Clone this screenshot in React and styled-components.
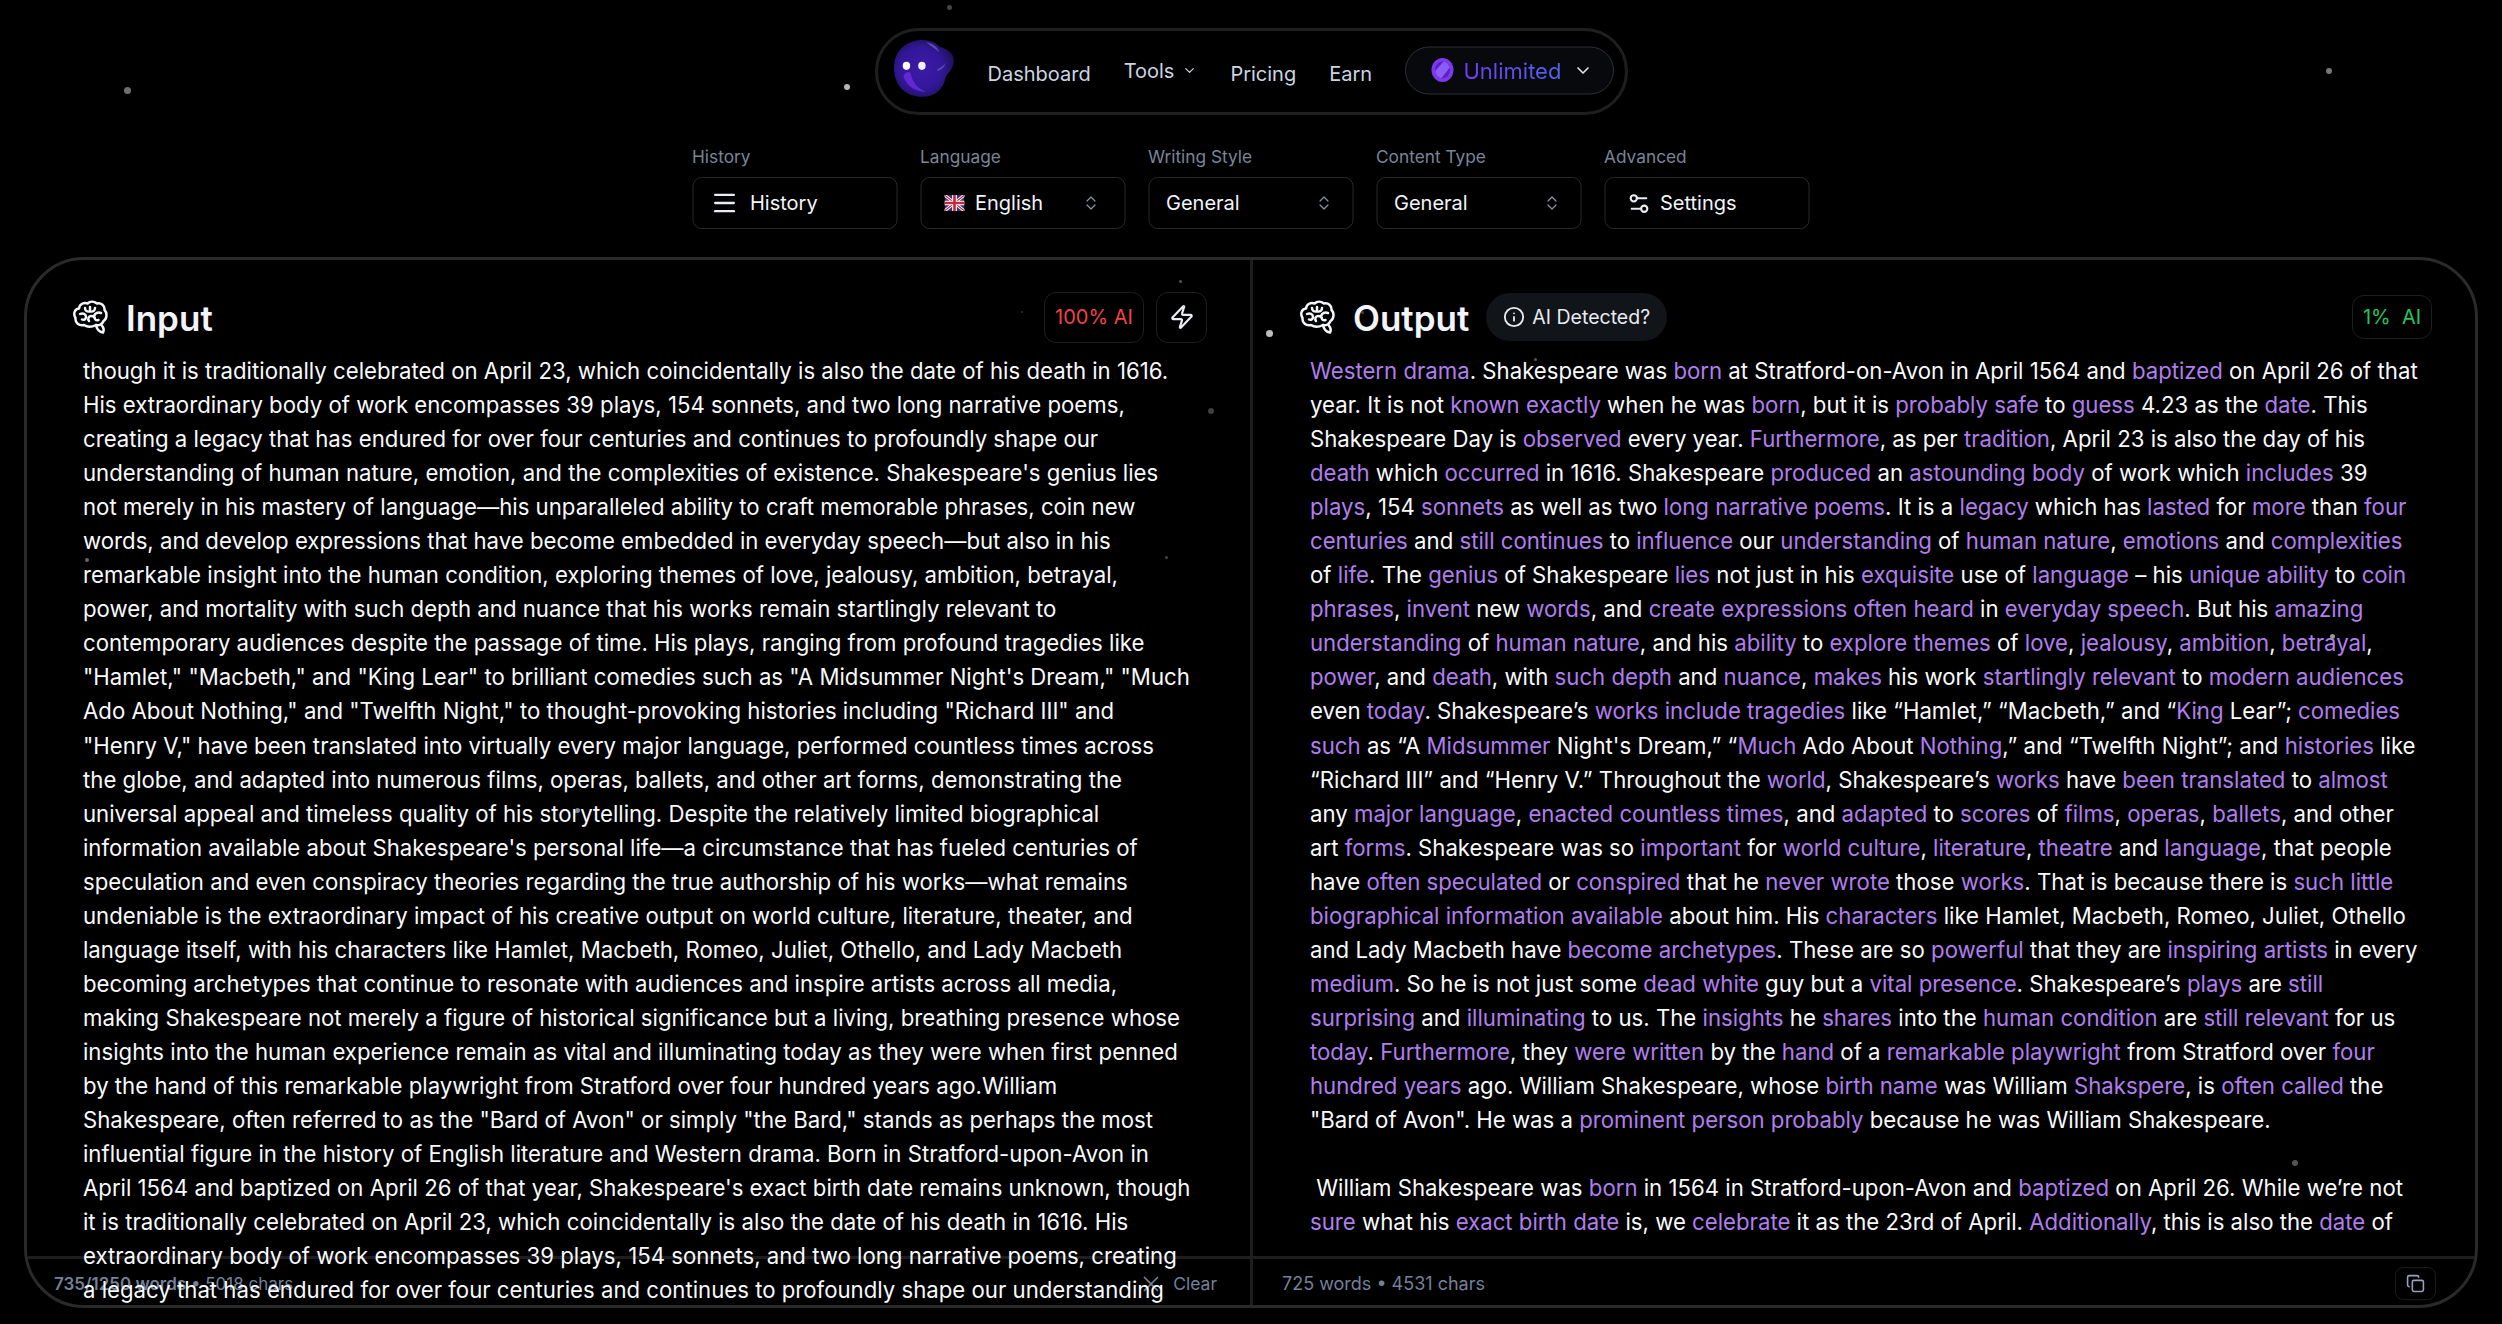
import React from "react";
import styled, { createGlobalStyle } from "styled-components";
import { ChevronDown, Menu, Settings2, Zap, Info, X, Copy } from "lucide-react";

const Global = createGlobalStyle`
  html, body { margin: 0; padding: 0; background: #000; }
  body { font-family: Inter, "Liberation Sans", sans-serif; color: #fff; }
`;
const Page = styled.div`
  position: relative; width: 2502px; height: 1324px; overflow: hidden; background: #000;
  display: flex; flex-direction: column; align-items: center; padding-top: 28px; box-sizing: border-box;
`;
const Dot = styled.i`
  position: absolute; border-radius: 50%; background: ${p => p.$c || "#777"}; z-index: 5;
`;
const Nav = styled.nav`
  width: 753px; height: 87px; box-sizing: border-box; border: 3px solid #1f1f1f; border-radius: 44px;
  display: flex; align-items: center; padding: 0 8px 0 14px;
`;
const Logo = styled.svg` width: 66px; height: 66px; flex: none; transform: translateY(-1px); `;
const NavLinks = styled.div` display: flex; align-items: center; margin-left: 30px; gap: 33px; flex: 1; `;
const NavLink = styled.a`
  font-size: 20px; color: #cbd5e1; display: flex; align-items: center; gap: 8px; white-space: nowrap;
  transform: translateY(${p => p.$up ? "-1px" : "2px"});
`;
const Plan = styled.button`
  width: 209px; height: 48px; border: 1px solid #2e3038; border-radius: 24px; background: #08090d;
  display: flex; align-items: center; padding: 0 0 0 25px; gap: 10px; font: 400 22px Inter, sans-serif;
  margin-right: 3px; transform: translateY(-1.5px);
`;
const PlanText = styled.span`
  background: linear-gradient(90deg, #6f3df0, #4f63e8); -webkit-background-clip: text; background-clip: text; color: transparent;
`;
const PlanIcon = styled.svg` width: 23px; height: 25px; flex: none; `;
const Controls = styled.div` display: flex; gap: 23px; margin-top: 31px; transform: translateX(-0.5px); `;
const Field = styled.div` width: 205px; display: flex; flex-direction: column; gap: 9px; `;
const Label = styled.label` font-size: 17.3px; line-height: 22px; color: #7a8599; `;
const Select = styled.div`
  height: 52px; box-sizing: border-box; border: 1px solid #26282c; border-radius: 9px; display: flex; align-items: center;
  padding: 0 ${p => p.$pr || 14}px 0 ${p => p.$pl || 14}px; gap: ${p => p.$gap || 11}px; font-size: 20px; color: #f1f5f9;
  svg { color: #e8edf3; flex: none; }
`;
const Updown = styled.svg` width: 11px; height: 14px; flex: none; `;
const Grow = styled.span` flex: 1; `;
const Panel = styled.section`
  position: relative; width: 2454px; height: 1051px; margin-top: 28px; box-sizing: border-box; flex: none;
  border: 3px solid #2a2a2a; border-radius: 60px; display: grid; grid-template-columns: 1223px 1fr; overflow: hidden;
`;
const Pane = styled.div`
  position: relative; overflow: hidden; display: flex; flex-direction: column; min-width: 0;
  & + & { border-left: 3px solid #1e1e1e; }
`;
const PaneHead = styled.header`
  height: 68px; padding: ${p => p.$out ? "24px 43px 0 46px" : "24px 43px 0 45px"};
  display: flex; align-items: center; flex: none;
`;
const BrainIcon = styled.svg` width: 36px; height: 36px; flex: none; transform: translateY(-1px); `;
const Title = styled.h2`
  margin: 0 0 0 18px; font-size: 35px; font-weight: 600; color: #f1f5f9; line-height: 44px;
`;
const Detect = styled.div`
  margin-left: 17px; height: 48px; border-radius: 24px; background: #111419; display: flex; align-items: center; gap: 7px;
  padding: 0 17px 0 17px; font-size: 19.5px; color: #e8ecf2; transform: translateY(-1px);
`;
const Badge = styled.div`
  height: ${p => p.$h || 51}px; box-sizing: border-box; border: 1px solid #1f1f1f; border-radius: 12px; display: flex; align-items: center; justify-content: center;
  width: ${p => p.$w}px; font-size: 20px; color: ${p => p.$c}; margin-left: ${p => p.$ml || 0}px; white-space: pre; transform: translateY(-1px);
`;
const Body = styled.div`
  position: relative; z-index: 3; padding: 2px 0 0 ${p => p.$out ? 57 : 56}px; font-size: 22.2px; line-height: 34.05px; color: #f8fafc;
`;
const Line = styled.div` white-space: pre; min-height: 34.05px; `;
const Mark = styled.span` color: #b07eee; `;
const Foot = styled.footer`
  position: absolute; left: 0; right: 0; bottom: 0; height: 43px; padding-top: 3px; border-top: 3px solid #1e1e1e;
  display: flex; align-items: center; font-size: 18px; color: #748198; z-index: 1;
`;
const Count = styled.span` white-space: pre; margin-left: ${p => p.$ml}px; font-size: ${p => p.$fs || 18}px; `;
const Strong = styled.span` font-weight: 600; `;
const Clear = styled.div`
  margin-left: auto; margin-right: 33px; display: flex; align-items: center; gap: 9px; font-size: 17.5px;
`;
const CopyBtn = styled.div`
  margin-left: auto; margin-right: 39px; width: 41px; height: 33px; box-sizing: border-box; border: 1px solid #1a1a1a; border-radius: 8px; display: flex; align-items: center; justify-content: center; color: #94a3b8;
`;

const input = `though it is traditionally celebrated on April 23, which coincidentally is also the date of his death in 1616.
His extraordinary body of work encompasses 39 plays, 154 sonnets, and two long narrative poems,
creating a legacy that has endured for over four centuries and continues to profoundly shape our
understanding of human nature, emotion, and the complexities of existence. Shakespeare's genius lies
not merely in his mastery of language—his unparalleled ability to craft memorable phrases, coin new
words, and develop expressions that have become embedded in everyday speech—but also in his
remarkable insight into the human condition, exploring themes of love, jealousy, ambition, betrayal,
power, and mortality with such depth and nuance that his works remain startlingly relevant to
contemporary audiences despite the passage of time. His plays, ranging from profound tragedies like
"Hamlet," "Macbeth," and "King Lear" to brilliant comedies such as "A Midsummer Night's Dream," "Much
Ado About Nothing," and "Twelfth Night," to thought-provoking histories including "Richard III" and
"Henry V," have been translated into virtually every major language, performed countless times across
the globe, and adapted into numerous films, operas, ballets, and other art forms, demonstrating the
universal appeal and timeless quality of his storytelling. Despite the relatively limited biographical
information available about Shakespeare's personal life—a circumstance that has fueled centuries of
speculation and even conspiracy theories regarding the true authorship of his works—what remains
undeniable is the extraordinary impact of his creative output on world culture, literature, theater, and
language itself, with his characters like Hamlet, Macbeth, Romeo, Juliet, Othello, and Lady Macbeth
becoming archetypes that continue to resonate with audiences and inspire artists across all media,
making Shakespeare not merely a figure of historical significance but a living, breathing presence whose
insights into the human experience remain as vital and illuminating today as they were when first penned
by the hand of this remarkable playwright from Stratford over four hundred years ago.William
Shakespeare, often referred to as the "Bard of Avon" or simply "the Bard," stands as perhaps the most
influential figure in the history of English literature and Western drama. Born in Stratford-upon-Avon in
April 1564 and baptized on April 26 of that year, Shakespeare's exact birth date remains unknown, though
it is traditionally celebrated on April 23, which coincidentally is also the date of his death in 1616. His
extraordinary body of work encompasses 39 plays, 154 sonnets, and two long narrative poems, creating
a legacy that has endured for over four centuries and continues to profoundly shape our understanding`.split("\n");

const output = `[Western drama]. Shakespeare was [born] at Stratford-on-Avon in April 1564 and [baptized] on April 26 of that
year. It is not [known exactly] when he was [born], but it is [probably safe] to [guess] 4.23 as the [date]. This
Shakespeare Day is [observed] every year. [Furthermore], as per [tradition], April 23 is also the day of his
[death] which [occurred] in 1616. Shakespeare [produced] an [astounding body] of work which [includes] 39
[plays], 154 [sonnets] as well as two [long narrative poems]. It is a [legacy] which has [lasted] for [more] than [four]
[centuries] and [still continues] to [influence] our [understanding] of [human nature], [emotions] and [complexities]
of [life]. The [genius] of Shakespeare [lies] not just in his [exquisite] use of [language] – his [unique ability] to [coin]
[phrases], [invent] new [words], and [create expressions often heard] in [everyday speech]. But his [amazing]
[understanding] of [human nature], and his [ability] to [explore themes] of [love], [jealousy], [ambition], [betrayal],
[power], and [death], with [such depth] and [nuance], [makes] his work [startlingly relevant] to [modern audiences]
even [today]. Shakespeare’s [works include tragedies] like “Hamlet,” “Macbeth,” and “[King] Lear”; [comedies]
[such] as “A [Midsummer] Night's Dream,” “[Much] Ado About [Nothing],” and “Twelfth Night”; and [histories] like
“Richard III” and “Henry V.” Throughout the [world], Shakespeare’s [works] have [been translated] to [almost]
any [major language], [enacted countless times], and [adapted] to [scores] of [films], [operas], [ballets], and other
art [forms]. Shakespeare was so [important] for [world culture], [literature], [theatre] and [language], that people
have [often speculated] or [conspired] that he [never wrote] those [works]. That is because there is [such little]
[biographical information available] about him. His [characters] like Hamlet, Macbeth, Romeo, Juliet, Othello
and Lady Macbeth have [become archetypes]. These are so [powerful] that they are [inspiring artists] in every
[medium]. So he is not just some [dead white] guy but a [vital presence]. Shakespeare’s [plays] are [still]
[surprising] and [illuminating] to us. The [insights] he [shares] into the [human condition] are [still relevant] for us
[today]. [Furthermore], they [were written] by the [hand] of a [remarkable playwright] from Stratford over [four]
[hundred years] ago. William Shakespeare, whose [birth name] was William [Shakspere], is [often called] the
"Bard of Avon". He was a [prominent person probably] because he was William Shakespeare.

 William Shakespeare was [born] in 1564 in Stratford-upon-Avon and [baptized] on April 26. While we’re not
[sure] what his [exact birth date] is, we [celebrate] it as the 23rd of April. [Additionally], this is also the [date] of`.split("\n");

const marked = (s) => s.split(/(\[[^\]]*\])/).map((t, i) =>
  t.startsWith("[") ? <Mark key={i}>{t.slice(1, -1)}</Mark> : t);

const dots = [
  [124, 87, 7, "#6f6f6f"], [844, 84, 6, "#b5b5b5"], [947, 5, 5, "#444"], [2326, 68, 6, "#777"],
  [1179, 280, 3, "#555"], [1266, 330, 7, "#bdbdbd"], [1208, 408, 6, "#3f3f3f"], [1165, 556, 3, "#444"],
  [85, 558, 4, "#666"], [575, 808, 5, "#888"], [2330, 634, 5, "#999"], [1534, 358, 3, "#555"],
  [2292, 1160, 6, "#555"], [1678, 918, 3, "#888"], [2197, 712, 3, "#999"], [1021, 311, 2, "#333"], [1361, 311, 3, "#444"],
];

const Blob = () => (
  <Logo viewBox="0 0 64 64">
    <defs>
      <radialGradient id="bl" cx="45%" cy="50%" r="60%">
        <stop offset="0" stopColor="#3d1ba6" />
        <stop offset=".6" stopColor="#33179a" />
        <stop offset="1" stopColor="#1c1150" />
      </radialGradient>
    </defs>
    <path d="M2 29C2 12 14 2 30 2c8 0 12 3 17 7 7 2 13 6 13 13 0 8-6 11-8 16-2 12-11 19-22 19C12 57 2 45 2 29Z" fill="url(#bl)" />
    <path d="M11 37c3 9 11 15 22 15-7-2-13-8-15-18-2-2-5-1-7 3z" fill="#6a2bdc" opacity=".85" />
    <path d="M33 4c6 1 11 4 13 10-4-4-8-6-13-10z" fill="#8a78d8" opacity=".55" />
    <path d="M44 30c3-1 6-3 8-6-1 4-4 7-8 8z" fill="#8a78d8" opacity=".5" />
    <ellipse cx="14" cy="27" rx="3.6" ry="4" fill="#fff" />
    <ellipse cx="29" cy="27" rx="3.6" ry="4" fill="#f4f0ff" />
  </Logo>
);

const Flag = () => (
  <svg width="20" height="16" viewBox="0 0 60 48">
    <rect width="60" height="48" fill="#2b3a7d" />
    <path d="M0 0l60 48M60 0L0 48" stroke="#fff" strokeWidth="9" />
    <path d="M0 0l60 48M60 0L0 48" stroke="#c8283c" strokeWidth="3.5" />
    <path d="M30 0v48M0 24h60" stroke="#fff" strokeWidth="14" />
    <path d="M30 0v48M0 24h60" stroke="#c8283c" strokeWidth="8" />
  </svg>
);

const UpDown = () => (
  <Updown viewBox="0 0 11 14" fill="none" stroke="#8a93a3" strokeWidth="1.2" strokeLinecap="round" strokeLinejoin="round">
    <path d="M1.5 5 5.5 1l4 4M1.5 9l4 4 4-4" />
  </Updown>
);

const BrainGlyph = () => (
  <BrainIcon viewBox="0 0 36 36" fill="none" stroke="#f4f6fa" strokeWidth="2.5" strokeLinecap="round" strokeLinejoin="round">
    <path d="M12 26C7 27 3 24 3.5 19 1 15 2.5 10 7 9.500 7.500 5 12 3 15.500 4.500 18 2 22 2 25 4.500c4-1 8 2 7.500 6.500 3 3 2.500 9-1 11-1 3-4.500 5-7.500 4-4 2-9 2-12 0Z" />
    <path d="M24 26c.5 3.500 3 7 7 7.500 1.500-2.500.5-5-1.500-7.500" />
    <path d="M18 8v4.500M13 9c0 3 2 4 5 3.500 3 .5 5-.5 5-3.500" />
    <path d="M8 15c3-1.500 6 0 6 3 0 2-2 3.500-4 2.500" />
    <path d="M29 14c-3-1-6 0-7 3" />
    <path d="M17 22c-1.500-2-.5-5 2-5 2 0 4 1 4 3 .5 1 2 1.500 3.500 1" />
  </BrainIcon>
);

export default function App() {
  return (
    <Page>
      <Global />
      {dots.map(([x, y, s, c], i) => <Dot key={i} $c={c} style={{ left: x, top: y, width: s, height: s }} />)}
      <Nav>
        <Blob />
        <NavLinks>
          <NavLink>Dashboard</NavLink>
          <NavLink $up>Tools <ChevronDown size={15} /></NavLink>
          <NavLink>Pricing</NavLink>
          <NavLink>Earn</NavLink>
        </NavLinks>
        <Plan>
          <PlanIcon viewBox="0 0 23 25">
            <defs><clipPath id="pc"><ellipse cx="11.5" cy="12.5" rx="7.5" ry="8.5" /></clipPath></defs>
            <ellipse cx="11.5" cy="12.5" rx="11" ry="12" fill="#7c3aed" />
            <ellipse cx="11.5" cy="12.5" rx="7.5" ry="8.5" fill="#5b21c6" />
            <path d="M2 16 16 0l6 6L8 24z" fill="#8b5cf6" clipPath="url(#pc)" />
          </PlanIcon>
          <PlanText>Unlimited</PlanText>
          <ChevronDown size={20} color="#dfe3ea" style={{ marginLeft: 2 }} />
        </Plan>
      </Nav>
      <Controls>
        <Field>
          <Label>History</Label>
          <Select $pl={17} $gap={12}><Menu size={28} strokeWidth={2} /><span>History</span></Select>
        </Field>
        <Field>
          <Label>Language</Label>
          <Select $pr={28} $pl={23}><Flag /><span>English</span><Grow /><UpDown /></Select>
        </Field>
        <Field>
          <Label>Writing Style</Label>
          <Select $pr={23} $pl={17}><span>General</span><Grow /><UpDown /></Select>
        </Field>
        <Field>
          <Label>Content Type</Label>
          <Select $pr={23} $pl={17}><span>General</span><Grow /><UpDown /></Select>
        </Field>
        <Field>
          <Label>Advanced</Label>
          <Select $pl={21} $gap={9}><Settings2 size={25} strokeWidth={2} /><span>Settings</span></Select>
        </Field>
      </Controls>
      <Panel>
        <Pane>
          <PaneHead>
            <BrainGlyph />
            <Title>Input</Title>
            <Grow />
            <Badge $w={100} $c="#ef4444">100% AI</Badge>
            <Badge $w={51} $ml={12} $c="#e8edf3"><Zap size={26} strokeWidth={2} /></Badge>
          </PaneHead>
          <Body>{input.map((l, i) => <Line key={i}>{l}</Line>)}</Body>
          <Foot>
            <Count $ml={27} $fs={17}><Strong>735/1250 words</Strong> • 5018 chars</Count>
            <Clear><X size={26} strokeWidth={1.6} /><span>Clear</span></Clear>
          </Foot>
        </Pane>
        <Pane>
          <PaneHead $out>
            <BrainGlyph />
            <Title>Output</Title>
            <Detect><Info size={22} />AI Detected?</Detect>
            <Grow />
            <Badge $w={80} $h={44} $c="#22c55e">{"1%  AI"}</Badge>
          </PaneHead>
          <Body $out>{output.map((l, i) => <Line key={i}>{marked(l)}</Line>)}</Body>
          <Foot>
            <Count $ml={29}>725 words • 4531 chars</Count>
            <CopyBtn><Copy size={19} /></CopyBtn>
          </Foot>
        </Pane>
      </Panel>
    </Page>
  );
}
